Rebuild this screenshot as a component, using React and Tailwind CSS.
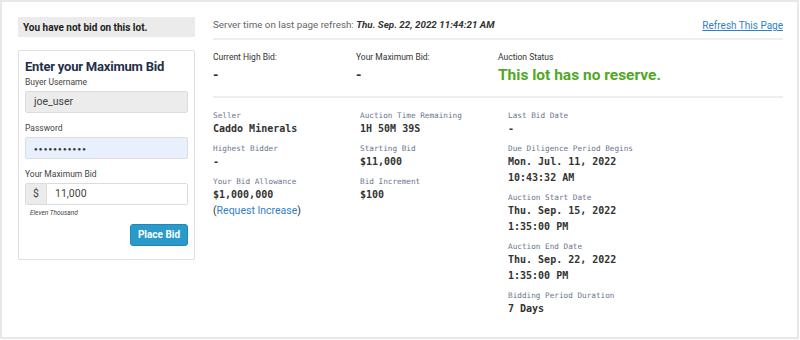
import React from "react";

const sans = { fontFamily: "Roboto, 'Noto Sans', sans-serif" };

const Field = ({ label, lines }) => (
  <div className="mb-[7px]">
    <div className="text-[7.7px] leading-[10px] text-[#6b7590]">{label}</div>
    {lines.map((l, i) => (
      <div key={i} className="text-[10px] leading-[16px] font-bold text-[#333]">
        {l}
      </div>
    ))}
  </div>
);

const App = () => {
  return (
    <div
      className="w-[799px] h-[339px] border-2 border-[#e8e8e8] bg-white flex"
      style={sans}
    >
      {/* LEFT: BID FORM */}
      <div className="w-[177px] ml-[16px] mt-[15px] shrink-0">
        <div className="h-[20px] bg-[#ebebeb] px-[5px] flex items-center text-[10px] font-bold text-[#222]">
          You have not bid on this lot.
        </div>

        <div className="mt-[13px] border border-[#e0e0e0] rounded-[2px] px-[6px] pt-[8px] pb-[13px]">
          <h2 className="text-[13px] leading-[16px] font-bold tracking-[-0.2px] text-[#22304a]">
            Enter your Maximum Bid
          </h2>
          <div className="text-[8.5px] leading-[12px] text-[#444] mt-[1px]">
            Buyer Username
          </div>
          <div className="mt-[3px] h-[22px] bg-[#ececec] border border-[#dcdcdc] rounded-[2px] flex items-center px-[8px] text-[10.5px] text-[#444]">
            joe_user
          </div>

          <div className="text-[8.5px] leading-[12px] text-[#444] mt-[9px]">
            Password
          </div>
          <div className="mt-[3px] h-[22px] bg-[#e8f0fe] border border-[#dcdcdc] rounded-[2px] flex items-center px-[8px] text-[6px] tracking-[1.2px] text-[#333]">
            ●●●●●●●●●●●
          </div>

          <div className="text-[8.5px] leading-[12px] text-[#444] mt-[9px]">
            Your Maximum Bid
          </div>
          <div className="mt-[3px] h-[22px] border border-[#dcdcdc] rounded-[2px] flex text-[10.5px] text-[#444]">
            <div className="w-[21px] bg-[#ececec] border-r border-[#dcdcdc] flex items-center justify-center">
              $
            </div>
            <div className="flex items-center px-[8px]">11,000</div>
          </div>
          <div className="mt-[4px] text-[6.5px] italic text-[#444] pl-[5px]">
            Eleven Thousand
          </div>

          <div className="flex justify-end mt-[5px]">
            <button className="w-[58px] h-[22px] bg-[#2a9acb] border border-[#1f88b6] rounded-[3px] text-white text-[10px] font-bold">
              Place Bid
            </button>
          </div>
        </div>
      </div>

      {/* RIGHT: DETAILS */}
      <div className="ml-[18px] w-[570px] shrink-0">
        <div className="h-[36px] flex items-end justify-between pb-[5px]">
          <p className="text-[9.8px] text-[#666]">
            Server time on last page refresh:{" "}
            <span className="font-bold italic text-[#333]">
              Thu. Sep. 22, 2022 11:44:21 AM
            </span>
          </p>
          <a className="text-[10px] text-[#2f7fc8] underline">Refresh This Page</a>
        </div>
        <div className="h-[2px] bg-[#eeeeee]" />

        <div className="flex h-[56px] pt-[11px]">
          <div className="w-[143px]">
            <div className="text-[8.5px] leading-[12px] text-[#333]">Current High Bid:</div>
            <div className="text-[14px] leading-[20px] font-bold text-[#333] mt-[2px]">-</div>
          </div>
          <div className="w-[142px]">
            <div className="text-[8.5px] leading-[12px] text-[#333]">Your Maximum Bid:</div>
            <div className="text-[14px] leading-[20px] font-bold text-[#333] mt-[2px]">-</div>
          </div>
          <div>
            <div className="text-[8.5px] leading-[12px] text-[#333]">Auction Status</div>
            <div className="text-[15.5px] leading-[20px] font-bold text-[#50a826] mt-[2px]">
              This lot has no reserve.
            </div>
          </div>
        </div>
        <div className="h-[2px] bg-[#eeeeee]" />

        <div
          className="flex pt-[13px]"
          style={{ fontFamily: "'DejaVu Sans Mono', 'Liberation Mono', monospace" }}
        >
          <div className="w-[147px]">
            <Field label="Seller" lines={["Caddo Minerals"]} />
            <Field label="Highest Bidder" lines={["-"]} />
            <div>
              <div className="text-[7.7px] leading-[10px] text-[#6b7590]">Your Bid Allowance</div>
              <div className="text-[10px] leading-[16px] font-bold text-[#333]">$1,000,000</div>
              <div className="text-[10.5px] leading-[16px] text-[#333]" style={sans}>
                (<a className="text-[#2f7fc8]">Request Increase</a>)
              </div>
            </div>
          </div>
          <div className="w-[148px]">
            <Field label="Auction Time Remaining" lines={["1H 50M 39S"]} />
            <Field label="Starting Bid" lines={["$11,000"]} />
            <Field label="Bid Increment" lines={["$100"]} />
          </div>
          <div>
            <Field label="Last Bid Date" lines={["-"]} />
            <Field label="Due Diligence Period Begins" lines={["Mon. Jul. 11, 2022", "10:43:32 AM"]} />
            <Field label="Auction Start Date" lines={["Thu. Sep. 15, 2022", "1:35:00 PM"]} />
            <Field label="Auction End Date" lines={["Thu. Sep. 22, 2022", "1:35:00 PM"]} />
            <Field label="Bidding Period Duration" lines={["7 Days"]} />
          </div>
        </div>
      </div>
    </div>
  );
};

export default App;
